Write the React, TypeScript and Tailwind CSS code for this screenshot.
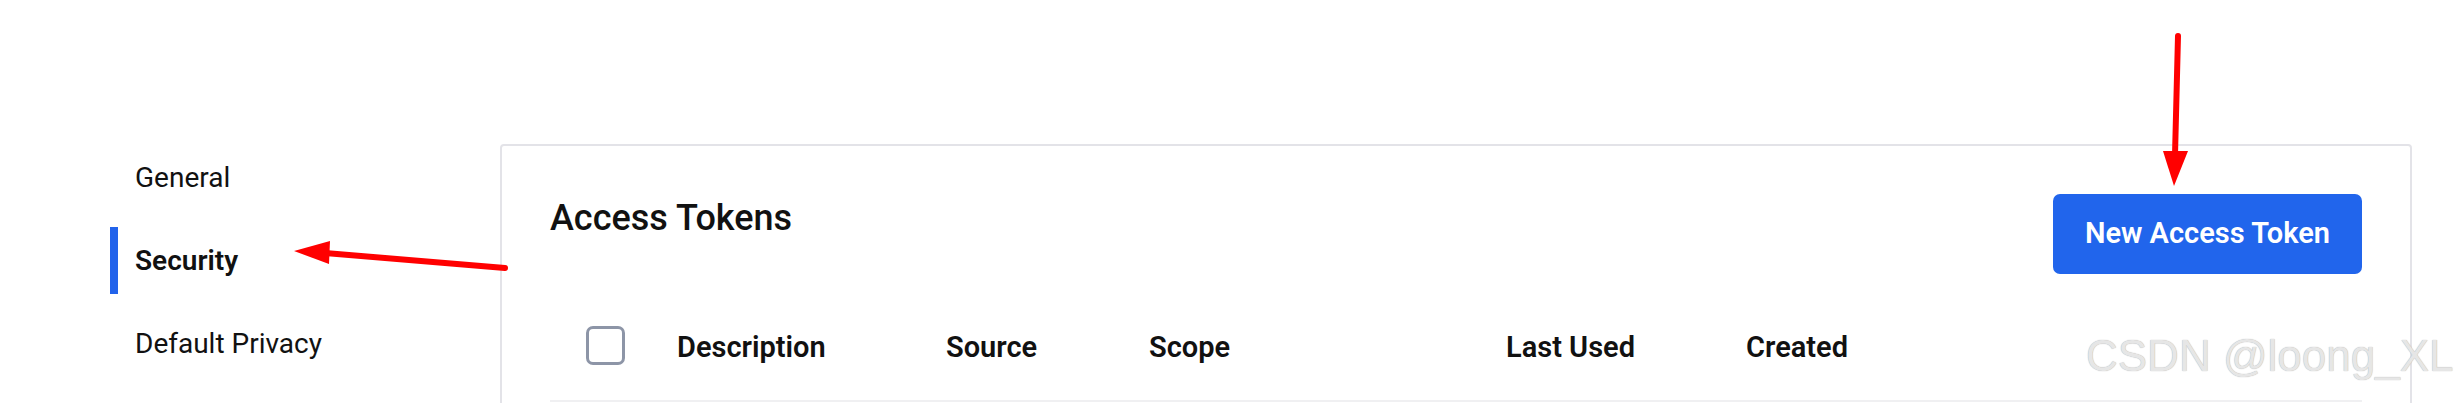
import React from "react";

const navItems = [
  { label: "General", active: false },
  { label: "Security", active: true },
  { label: "Default Privacy", active: false },
];

export default function App() {
  return (
    <div className="relative h-[403px] w-[2457px] overflow-hidden bg-white font-['Roboto',sans-serif] text-[#111111]">
      <div className="flex pt-[144px] pl-[110px] pr-[45px]">
        {/* Sidebar nav */}
        <nav className="flex w-[390px] shrink-0 flex-col gap-[16px]">
          {navItems.map((item) => (
            <div key={item.label} className="flex h-[67px] items-center">
              <div className={item.active ? "h-full w-[8px] bg-[#2263eb]" : "h-full w-[8px]"} />
              <span
                className={
                  item.active
                    ? "pl-[17px] text-[28px] font-semibold leading-none text-[#111]"
                    : "pl-[17px] text-[28px] font-normal leading-none text-[#111]"
                }
              >
                {item.label}
              </span>
            </div>
          ))}
        </nav>

        {/* Card */}
        <div className="flex-1 rounded-[4px] border-2 border-[#e3e3e8] px-[48px] pt-[48px] pb-[60px]">
          <div className="flex items-start justify-between">
            <h2 className="pt-[2px] text-[36px] font-medium leading-[44px] text-[#111]">Access Tokens</h2>
            <button className="flex h-[80px] items-center rounded-[7px] bg-[#2165ec] px-[32px] text-[29px] font-semibold text-white">
              New Access Token
            </button>
          </div>

          <div className="mt-[16px] grid h-[112px] grid-cols-[127px_269px_203px_357px_240px_1fr] items-center border-b-2 border-[#f0f0f2] text-[29px] font-semibold leading-none text-[#111]">
            <div className="pl-[36px]">
              <div className="h-[39px] w-[39px] rounded-[7px] border-[3px] border-[#8d95a7] bg-white" />
            </div>
            <div className="pt-[4px]">Description</div>
            <div className="pt-[4px]">Source</div>
            <div className="pt-[4px]">Scope</div>
            <div className="pt-[4px]">Last Used</div>
            <div className="pt-[4px]">Created</div>
          </div>
          <div className="h-[80px]" />
        </div>
      </div>

      {/* Annotation arrows */}
      <svg className="pointer-events-none absolute left-0 top-0" width="2457" height="403" viewBox="0 0 2457 403">
        <line x1="505" y1="268" x2="325" y2="253" stroke="#ff0000" strokeWidth="6" strokeLinecap="round" />
        <polygon points="294,251 330,241 329,264" fill="#ff0000" />
        <line x1="2178" y1="36" x2="2175" y2="155" stroke="#ff0000" strokeWidth="6" strokeLinecap="round" />
        <polygon points="2163,151 2188,151 2174,186" fill="#ff0000" />
      </svg>

      {/* Watermark */}
      <div className="pointer-events-none absolute left-[2086px] top-[334px] whitespace-nowrap font-['Liberation_Sans',sans-serif] text-[44px] leading-none text-[#e6e6e6] [text-shadow:0_0_1px_#a0a0a0]">
        CSDN @loong_XL
      </div>
    </div>
  );
}
